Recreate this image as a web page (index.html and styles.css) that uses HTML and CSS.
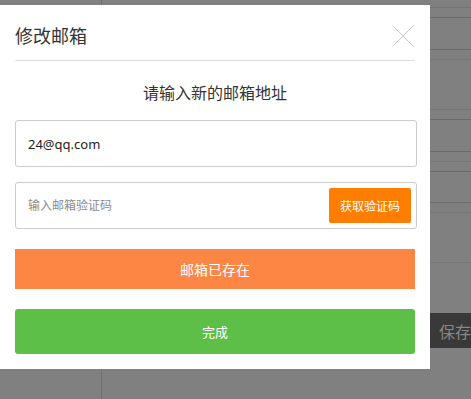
FILE: index.html
```html
<!DOCTYPE html>
<html lang="zh-CN">
<head>
    <meta charset="UTF-8">
    <meta name="viewport" content="width=device-width, initial-scale=1.0">
    <title>修改邮箱</title>
    <link rel="stylesheet" href="styles.css">
</head>
<body>
    <!-- página de fondo, tapada por la capa gris -->
    <div class="page">
        <div class="sidebar"></div>
        <div class="main">
            <div class="row row-top line-light"></div>
            <div class="row gap line-dark"></div>
            <div class="row cell line-dark"></div>
            <div class="row gap line-light"></div>
            <div class="row spacer line-light"></div>
            <div class="row gap line-dark"></div>
            <div class="row cell line-dark"></div>
            <div class="row gap line-light"></div>
            <div class="row gap line-dark"></div>
            <div class="row cell-short line-dark"></div>
            <div class="row gap line-light"></div>
            <div class="row spacer line-light"></div>
            <div class="save-bar">
                <span class="save">保存</span>
            </div>
        </div>
    </div>

    <div class="modal">
        <div class="modal-header">
            <h2 class="modal-title">修改邮箱</h2>
            <button class="close" type="button" aria-label="关闭">
                <svg width="22" height="22" viewBox="0 0 22 22">
                    <path d="M0.5 0.5 L21.5 21.5 M21.5 0.5 L0.5 21.5" stroke="#c9c9c9" stroke-width="1" fill="none"/>
                </svg>
            </button>
        </div>

        <p class="subtitle">请输入新的邮箱地址</p>

        <div class="field">
            <input class="input" type="text" value="24@qq.com">
        </div>

        <div class="field field-code">
            <input class="input input-code" type="text" placeholder="输入邮箱验证码">
            <button class="btn-code" type="button">获取验证码</button>
        </div>

        <div class="alert">邮箱已存在</div>

        <button class="btn-done" type="button">完成</button>
    </div>
</body>
</html>
```

FILE: styles.css
```css
* {
    margin: 0;
    padding: 0;
    box-sizing: border-box;
    font-family: 'Noto Sans', 'Noto Sans CJK SC', sans-serif;
}

body {
    height: 100vh;
    overflow: hidden;
    background: #808080;
}

/* fondo */
.page {
    display: flex;
    height: 100%;
}

.sidebar {
    width: 105px;
    border-right: 1px solid #6f6f6f;
}

.main {
    flex: 1;
}

.row {
    border-bottom: 1px solid #6c6c6c;
}

.line-light {
    border-bottom-color: #767676;
}

.line-dark {
    border-bottom-color: #6a6a6a;
}

.row-top {
    height: 8px;
}

.gap {
    height: 10px;
}

.cell {
    height: 32px;
}

.cell-short {
    height: 31px;
}

.spacer {
    height: 50px;
}

.save-bar {
    margin-top: 50px;
    margin-left: 280px;
    height: 35px;
    background: #393939;
    display: flex;
    align-items: center;
    padding-left: 57px;
}

.save {
    font-size: 16px;
    color: #878787;
    white-space: nowrap;
}

/* modal */
.modal {
    position: absolute;
    left: 0;
    top: 5px;
    width: 430px;
    background: white;
    padding: 0 15px 15px;
}

.modal-header {
    display: flex;
    justify-content: space-between;
    align-items: center;
    height: 56px;
    padding-top: 6px;
    border-bottom: 1px solid #dddddd;
}

.modal-title {
    font-size: 18px;
    font-weight: 400;
    color: #333333;
    line-height: 24px;
}

.close {
    border: none;
    background: none;
    width: 22px;
    height: 22px;
    margin-right: 1px;
    display: flex;
}

.subtitle {
    margin-top: 20px;
    text-align: center;
    font-size: 16px;
    line-height: 24px;
    color: #333333;
}

.field {
    margin-top: 15px;
    width: 402px;
    height: 47px;
    border: 1px solid #cccccc;
    border-radius: 3px;
    display: flex;
    align-items: center;
}

.input {
    flex: 1;
    height: 100%;
    border: none;
    outline: none;
    background: none;
    padding-left: 12px;
    font-size: 13px;
    color: #222222;
}

.input-code {
    font-size: 12px;
}

.input-code::placeholder {
    color: #8c8c8c;
}

.btn-code {
    width: 82px;
    height: 35px;
    margin-right: 5px;
    border: none;
    border-radius: 2px;
    background: #ff7d00;
    color: white;
    font-size: 12px;
}

.alert {
    margin-top: 20px;
    height: 40px;
    background: #fd8645;
    color: white;
    font-size: 14px;
    display: flex;
    justify-content: center;
    align-items: center;
}

.btn-done {
    display: block;
    margin-top: 20px;
    width: 400px;
    height: 45px;
    border: none;
    border-radius: 3px;
    background: #5dbf47;
    color: white;
    font-size: 13px;
}
```
